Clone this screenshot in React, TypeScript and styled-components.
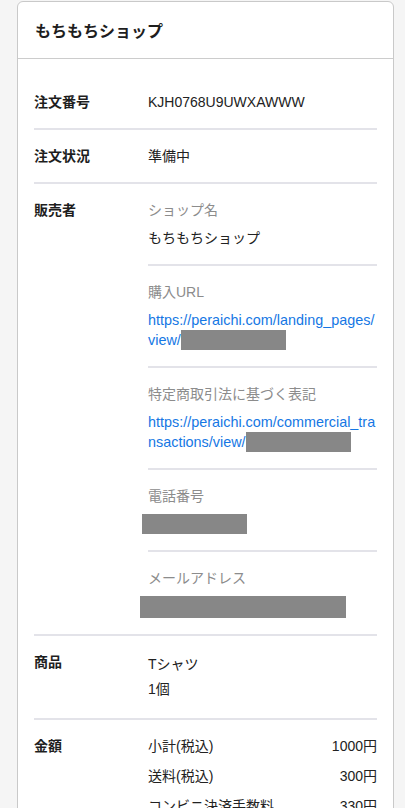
import React from "react";
import styled, { createGlobalStyle } from "styled-components";

const Global = createGlobalStyle`
  html, body {
    margin: 0;
    padding: 0;
    background: #f5f5f5;
  }
  body {
    font-family: "Liberation Sans", "Noto Sans CJK JP", sans-serif;
    color: #222;
    -webkit-font-smoothing: antialiased;
  }
`;

const Card = styled.div`
  margin: 1px 11px 0 17px;
  background: #fff;
  border: 1px solid #c9c9c9;
  border-radius: 6px;
`;

const Header = styled.div`
  height: 56px;
  display: flex;
  align-items: center;
  padding: 0 17px;
  border-bottom: 1px solid #cccccc;
`;

const Title = styled.h1`
  margin: 0;
  font-size: 16px;
  font-weight: 700;
  color: #1e1e1e;
`;

const Body = styled.div`
  padding: 17px 16px 0 16px;
`;

const Row = styled.div<{ $last?: boolean }>`
  display: grid;
  grid-template-columns: 114px 1fr;
  padding: 16px 0;
  border-bottom: ${(p) => (p.$last ? "none" : "2px solid #e3e3e9")};
`;

const Label = styled.div`
  font-size: 14px;
  line-height: 20px;
  font-weight: 700;
  color: #1e1e1e;
`;

const Value = styled.div`
  font-size: 14px;
  line-height: 20px;
  color: #222;
`;

const Lines = styled.div`
  font-size: 14px;
  line-height: 25px;
  color: #222;
`;

const SubList = styled.div`
  display: flex;
  flex-direction: column;
`;

const SubItem = styled.div`
  display: flex;
  flex-direction: column;
  gap: 8px;
  padding: 16px 0;
  border-bottom: 2px solid #e3e3e9;
  &:first-child {
    padding-top: 0;
  }
  &:last-child {
    padding-bottom: 0;
    border-bottom: none;
  }
`;

const SubLabel = styled.div`
  font-size: 14px;
  line-height: 20px;
  color: #8c8c8c;
`;

const Link = styled.a`
  font-size: 14.4px;
  line-height: 20px;
  color: #1577e4;
  text-decoration: none;
  word-break: break-all;
`;

const Redact = styled.span<{ $w: number; $h: number; $shift?: number }>`
  display: inline-block;
  vertical-align: bottom;
  width: ${(p) => p.$w}px;
  height: ${(p) => p.$h}px;
  margin-left: ${(p) => p.$shift ?? 0}px;
  background: #878787;
`;

const RedactBlock = styled(Redact)`
  display: block;
`;

const PriceList = styled.div`
  display: flex;
  flex-direction: column;
  gap: 10px;
`;

const PriceRow = styled.div`
  display: flex;
  justify-content: space-between;
  font-size: 14px;
  line-height: 20px;
  color: #222;
`;

export default function App() {
  return (
    <>
      <Global />
      <Card>
        <Header>
          <Title>もちもちショップ</Title>
        </Header>
        <Body>
          <Row>
            <Label>注文番号</Label>
            <Value>KJH0768U9UWXAWWW</Value>
          </Row>
          <Row>
            <Label>注文状況</Label>
            <Value>準備中</Value>
          </Row>
          <Row>
            <Label>販売者</Label>
            <SubList>
              <SubItem>
                <SubLabel>ショップ名</SubLabel>
                <Value>もちもちショップ</Value>
              </SubItem>
              <SubItem>
                <SubLabel>購入URL</SubLabel>
                <Link href="#">
                  https://peraichi.com/landing_pages/view/
                  <Redact $w={105} $h={20} />
                </Link>
              </SubItem>
              <SubItem>
                <SubLabel>特定商取引法に基づく表記</SubLabel>
                <Link href="#">
                  https://peraichi.com/commercial_transactions/view/
                  <Redact $w={105} $h={20} />
                </Link>
              </SubItem>
              <SubItem>
                <SubLabel>電話番号</SubLabel>
                <RedactBlock $w={105} $h={20} $shift={-6} />
              </SubItem>
              <SubItem>
                <SubLabel>メールアドレス</SubLabel>
                <RedactBlock $w={206} $h={22} $shift={-8} />
              </SubItem>
            </SubList>
          </Row>
          <Row>
            <Label>商品</Label>
            <Lines>
              <div>Tシャツ</div>
              <div>1個</div>
            </Lines>
          </Row>
          <Row $last>
            <Label>金額</Label>
            <PriceList>
              <PriceRow>
                <span>小計(税込)</span>
                <span>1000円</span>
              </PriceRow>
              <PriceRow>
                <span>送料(税込)</span>
                <span>300円</span>
              </PriceRow>
              <PriceRow>
                <span>コンビニ決済手数料</span>
                <span>330円</span>
              </PriceRow>
            </PriceList>
          </Row>
        </Body>
      </Card>
    </>
  );
}
